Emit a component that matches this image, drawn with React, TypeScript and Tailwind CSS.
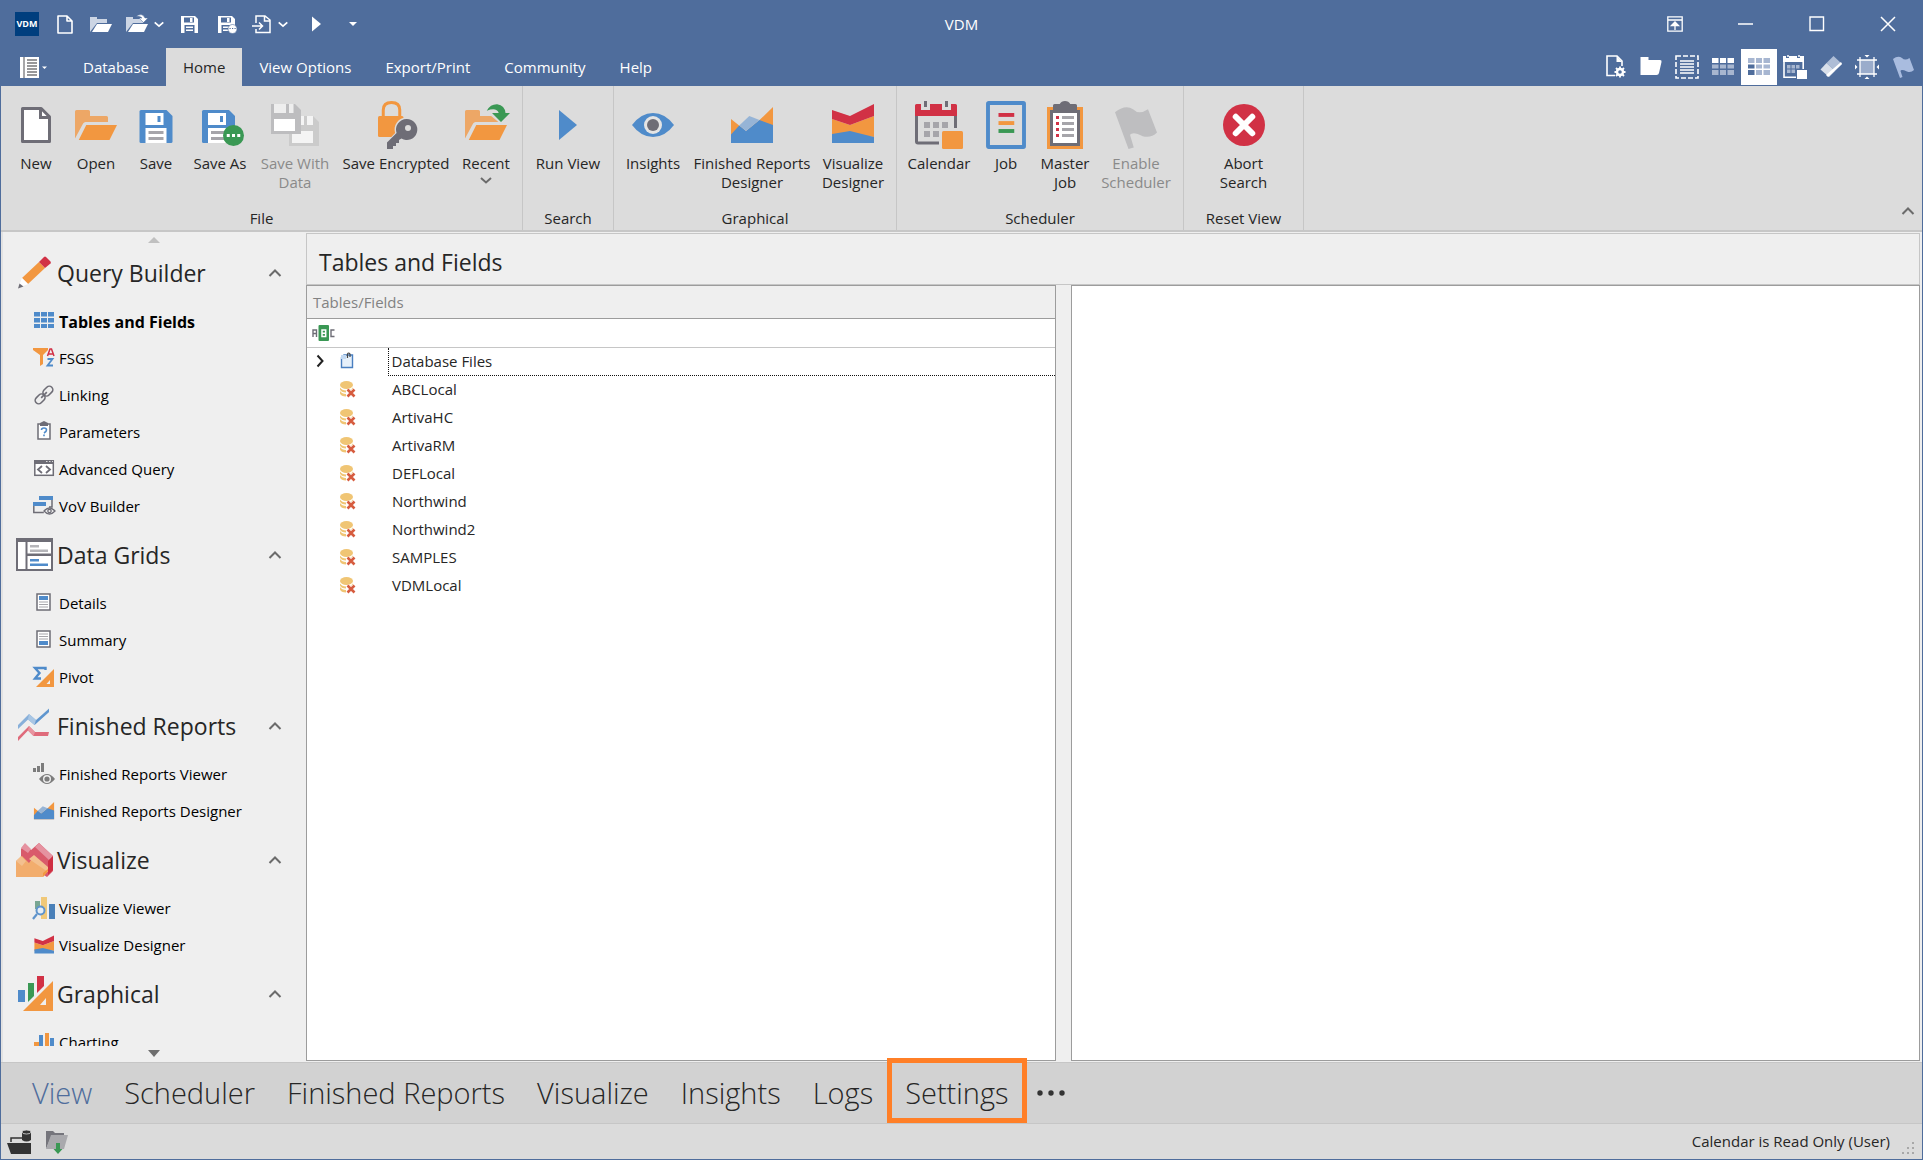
import type { ReactNode } from "react";

const ORANGE = "#f29740";
const LIGHT_ORANGE = "#eda766";
const BLUE = "#4f8bca";
const GREY = "#6e6d76";
const SILVER = "#a6a5aa";
const GREEN = "#3a9854";
const RED = "#d13145";

function Svg({ size = 24, box, children }: { size?: number; box?: number; children: ReactNode }) {
  const b = box ?? size;
  return (
    <svg width={size} height={size} viewBox={`0 0 ${b} ${b}`} fill="none" className="shrink-0" aria-hidden="true">
      {children}
    </svg>
  );
}

function Chevron({ dir, size = 14, color = "#6b6b6b" }: { dir: "up" | "down" | "right"; size?: number; color?: string }) {
  const d = { up: "M1.5 10 7 4.5 12.5 10", down: "M2 5 7 9.5 12 5", right: "M4.5 1.5 9.5 7 4.5 12.5" }[dir];
  return (
    <Svg size={size} box={14}>
      <path d={d} stroke={color} strokeWidth="2" />
    </Svg>
  );
}

// ---- ribbon drawings, all on a 32 unit grid ----

const folderShape = (
  <>
    <path d="M2 25V7q0-1 1-1h8q1 0 1 1v3h11q1 0 1 1v3H9q-1 0-1.6 1z" fill={LIGHT_ORANGE} />
    <path d="M9.5 16H30l-5 10H4.5z" fill={ORANGE} />
  </>
);

const floppyShape = (
  <>
    <path d="M5 7q0-1 1-1h17l4 4v17q0 1-1 1H6q-1 0-1-1z" fill={BLUE} />
    <path d="M9 8h12v8H9zM9 18h14v10H9z" fill="#fff" />
    <path d="M17 10h2v4h-2z" fill={BLUE} />
    <path d="M11 20h10v2H11zM11 24h10v2H11z" fill={SILVER} />
  </>
);

const reportChart = (
  <>
    <path d="M2 12 12 20 21 12.7 30 4V28H2z" fill={ORANGE} />
    <path d="M2 22.4 7.5 16.4 12 20 21 12.7 30 16V28H2z" fill={BLUE} />
    <path d="M7.5 16.4 14.2 10 21 12.7 12 20z" fill="#96b4d6" />
  </>
);

const visualizeChart = (
  <>
    <path d="M2 12 14 16 30 10V24L14 22 2 24z" fill={ORANGE} />
    <path d="M2 6 14 10 30 2V10L14 16 2 12z" fill={RED} />
    <path d="M2 22 14 20 30 24V28H2z" fill={BLUE} />
  </>
);

const ribbonIcons: Record<string, ReactNode> = {
  new: (
    <>
      <path d="M7 5h12.5L25 10.5V27H7z" fill="#fff" stroke={GREY} strokeWidth="2" strokeLinejoin="round" />
      <path d="M19 5v6h6" stroke={GREY} strokeWidth="2" />
    </>
  ),
  open: folderShape,
  save: floppyShape,
  saveAs: (
    <>
      <g transform="translate(-1 0)">{floppyShape}</g>
      <circle cx="25" cy="23" r="7" fill={GREEN} />
      <path d="M20.5 22h2v2h-2zM24 22h2v2h-2zM27.5 22h2v2h-2z" fill="#fff" />
    </>
  ),
  saveWithData: (
    <>
      <path d="M12 10h16l4 4v16H12z" fill="#cbcbcb" />
      <path d="M18 10h10v6H18zM14 20h14v8H14z" fill="#f4f4f4" />
      <path d="M22 10h2v6h-2z" fill="#cbcbcb" />
      <path d="M0 2h16l4 4v16H0z" fill="#bdbdbf" />
      <path d="M2 2h13v6H2z" fill="#eee" />
      <path d="M2 12h14v8H2z" fill="#fff" />
      <path d="M10 2h2v6h-2z" fill="#bdbdbf" />
    </>
  ),
  encrypted: (
    <>
      <path d="M7.5 11V6q0-5 5.5-5t5.5 5v5" stroke={ORANGE} strokeWidth="2" />
      <path d="M5 10h15q1 0 1 1v12q0 1-1 1H5q-1 0-1-1V11q0-1 1-1z" fill={ORANGE} />
      <path d="M23 11a8 8 0 0 0-7.6 10.4L9 28v4h4l8-5.5a8 8 0 0 0 2-15.5z" fill="#dcdcdc" />
      <path d="M23 12a7 7 0 0 0-6.6 9.3L10 27.6V32h4v-2h2v-2h2v-2l1.6-1A7 7 0 1 0 23 12zm1 4a2 2 0 1 1 0 4 2 2 0 0 1 0-4z" fill={GREY} fillRule="evenodd" />
    </>
  ),
  recent: (
    <>
      {folderShape}
      <path d="M17 8h15l-6.5 7z" fill="#dcdcdc" />
      <path d="M16.5 6.5Q19 2 23.5 2.2 28.5 3 29 8h3l-6 6-6-6h4.5q-1.5-4-8-1.5z" fill={GREEN} />
    </>
  ),
  run: <path d="M10 6 22 16 10 26z" fill={BLUE} />,
  insights: (
    <>
      <path d="M2 16Q8 8 16 8t14 8q-6 8-14 8T2 16z" fill={BLUE} />
      <circle cx="16" cy="16" r="6" fill="#e4e4e4" />
      <circle cx="16" cy="16" r="4" fill={GREY} />
    </>
  ),
  reportsDesigner: reportChart,
  visualizeDesigner: visualizeChart,
  calendar: (
    <>
      <path d="M0 3q0-1 1-1h3v4h6V2h8v4h6V2h3q1 0 1 1v7H0z" fill={RED} />
      <path d="M6 0h2v4H6zM20 0h2v4h-2z" fill={GREY} />
      <path d="M1 10v17q0 1 1 1h14M27 10v8" stroke={GREY} strokeWidth="2" />
      <path d="M6 14h4v4H6zM12 14h4v4h-4zM18 14h4v4h-4zM6 20h4v4H6zM12 20h4v4h-4z" fill={SILVER} />
      <rect x="18" y="20" width="14" height="12" rx="1" fill={ORANGE} />
    </>
  ),
  job: (
    <>
      <rect x="4" y="1.3" width="24" height="29.4" rx="0.5" stroke={BLUE} strokeWidth="2.6" />
      <path d="M11 8h10.5v2.6H11z" fill={RED} />
      <path d="M11 13.4h10.5V16H11z" fill={ORANGE} />
      <path d="M11 18.7h10.5v2.6H11z" fill={GREEN} />
    </>
  ),
  masterJob: (
    <>
      <path d="M4 4h24v28H4z" fill={ORANGE} />
      <path d="M6 6h20v24H6z" fill={GREY} />
      <path d="M8 8h16v20H8z" fill="#fff" />
      <path d="M8 8V3q0-1 1-1h3.5Q13.5 0 16 0t3.5 2H23q1 0 1 1v5z" fill={GREY} />
      <path d="M10 10h2v2h-2zM10 14h2v2h-2zM10 18h2v2h-2zM10 22h2v2h-2z" fill={RED} />
      <path d="M14 10h8v2h-8zM14 14h8v2h-8zM14 18h8v2h-8zM14 22h8v2h-8z" fill={SILVER} />
    </>
  ),
  enable: <path d="M2 7.5Q9 2 14 5.5q4 4 10 0L30 21q-4 4-9.5 2.5Q14 20 12 22.5l2.5 8.5-3.5 1z" fill="#bebec0" />,
  abort: (
    <>
      <circle cx="16" cy="16" r="14" fill={RED} />
      <path d="M10.5 10.5l11 11m0-11-11 11" stroke="#fff" strokeWidth="4" strokeLinecap="round" />
    </>
  ),
};

type RibbonItem = { icon: string; lines: string[]; width: string; disabled?: boolean; drop?: boolean };

const ribbonGroups: { name: string; className: string; items: RibbonItem[] }[] = [
  {
    name: "File",
    className: "w-[521px] pl-[5px]",
    items: [
      { icon: "new", lines: ["New"], width: "w-[60px]" },
      { icon: "open", lines: ["Open"], width: "w-[60px]" },
      { icon: "save", lines: ["Save"], width: "w-[60px]" },
      { icon: "saveAs", lines: ["Save As"], width: "w-[68px]" },
      { icon: "saveWithData", lines: ["Save With", "Data"], width: "w-[82px]", disabled: true },
      { icon: "encrypted", lines: ["Save Encrypted"], width: "w-[120px]" },
      { icon: "recent", lines: ["Recent"], width: "w-[60px]", drop: true },
    ],
  },
  {
    name: "Search",
    className: "w-[90px]",
    items: [{ icon: "run", lines: ["Run View"], width: "w-[90px]" }],
  },
  {
    name: "Graphical",
    className: "w-[282px] pl-[3px]",
    items: [
      { icon: "insights", lines: ["Insights"], width: "w-[72px]" },
      { icon: "reportsDesigner", lines: ["Finished Reports", "Designer"], width: "w-[126px]" },
      { icon: "visualizeDesigner", lines: ["Visualize", "Designer"], width: "w-[76px]" },
    ],
  },
  {
    name: "Scheduler",
    className: "w-[286px] pl-[4px]",
    items: [
      { icon: "calendar", lines: ["Calendar"], width: "w-[76px]" },
      { icon: "job", lines: ["Job"], width: "w-[58px]" },
      { icon: "masterJob", lines: ["Master", "Job"], width: "w-[60px]" },
      { icon: "enable", lines: ["Enable", "Scheduler"], width: "w-[82px]", disabled: true },
    ],
  },
  {
    name: "Reset View",
    className: "w-[119px]",
    items: [{ icon: "abort", lines: ["Abort", "Search"], width: "w-[119px]" }],
  },
];

// ---- sidebar drawings ----

const docFrame = <rect x="5" y="2" width="13" height="16" fill="#fff" stroke={GREY} strokeWidth="1.5" />;

const navIcons: Record<string, ReactNode> = {
  pencil: (
    <>
      <path d="m6 24 17-16 6 6-17 16z" fill={ORANGE} />
      <path d="m23 8 5-5q1-.8 2 0l4.5 4.5q.8 1 0 2L29 14z" fill={RED} />
      <path d="m6 24 6 6-10 4z" fill="#fff" />
      <path d="m3.5 29.5 4 3L2 34.5z" fill={GREY} />
    </>
  ),
  grids: (
    <>
      <path d="M0 2h37v33H0z" fill={GREY} />
      <path d="M2 6h7.5v27H2zM11.5 6H35v11.5H11.5zM11.5 20H35v13H11.5z" fill="#fff" />
      <path d="M14 9h9v2.5h-9zM14 13.5h18V16H14z" fill="#b5b5b9" />
      <path d="M14 23h9v2.5h-9zM14 27.5h18V30H14z" fill={BLUE} />
    </>
  ),
  reports: (
    <g transform="translate(0 1)">
      <path d="M2 17 13 6l7 6L33 1v3L18.5 17 12 11.5 2 21z" fill="#88b0da" />
      <path d="m13 6 7 6-1.5 5-6.5-5.5z" fill="#a9c6e4" />
      <path d="m20 12.5 13-12v3.5L18.5 17z" fill={BLUE} fillOpacity=".7" />
      <path d="M2 29 13 18l6 6h14l-1 4H17.5L12 22.5 2 33z" fill="#df6b7b" />
      <path d="m13 18 6 6-1.5 4-5.5-5.5z" fill="#e895a0" />
    </g>
  ),
  visualize: (
    <>
      <path d="M5 8 9 3l6 6 8-7 14 13v15l-6 6L5 20z" fill="#d95a6b" />
      <path d="m9 2 6 6-3 4-7-5zM23 2l14 13-4 4-14-13z" fill="#e592a0" />
      <path d="m32 20 5-5v14l-5 5z" fill="#cf2f43" />
      <path d="m0 20 6-5 7 7 5-7 14 15-5 6H0z" fill="#f2ad6d" />
      <path d="m0 20 5-5 5 5-4 5zM18 14l14 12v5L13 18z" fill="#f3c08f" />
      <path d="m27 36 5-6v-2l-5 4z" fill={ORANGE} />
    </>
  ),
  graphical: (
    <>
      <path d="M2 15h7v12H2z" fill={BLUE} />
      <path d="M12 8h6v13l-6 6z" fill={GREEN} />
      <path d="M21 1h7v10l-7 7z" fill={RED} />
      <path d="M37 6v30H7zm-7 17-6 7h6z" fill={ORANGE} fillRule="evenodd" />
    </>
  ),
  tables: (
    <path
      d="M2 2h6v4.5H2zM9 2h6v4.5H9zM16 2h6v4.5h-6zM2 8h6v4.5H2zM9 8h6v4.5H9zM16 8h6v4.5h-6zM2 14h6v4H2zM9 14h6v4H9zM16 14h6v4h-6z"
      fill={BLUE}
    />
  ),
  filter: (
    <>
      <path d="M1 1h15v2l-5 5v9l-3 2V8L1 3z" fill={ORANGE} />
      <path d="m15.5 9 2.5-7h1.5L22 9M16.5 7h4.5" stroke={RED} strokeWidth="1.5" />
      <path d="M15.5 12h5l-5 6.5H21" stroke={BLUE} strokeWidth="1.8" />
    </>
  ),
  link: (
    <g transform="rotate(-45 12 11)" stroke={GREY} strokeWidth="1.6">
      <rect x="1" y="7.5" width="11" height="7" rx="3.5" />
      <rect x="12" y="7.5" width="11" height="7" rx="3.5" />
      <path d="M8 11h8" />
    </g>
  ),
  params: (
    <>
      <rect x="6" y="3" width="12" height="15" fill="#fff" stroke={GREY} strokeWidth="1.5" />
      <path d="M8 5V2l4-2 4 2v3z" fill={GREY} />
      <path d="M9.5 9q0-2 2.5-2t2.5 2q0 1.5-2.5 3M12 13.5v1.8" stroke={BLUE} strokeWidth="1.6" />
    </>
  ),
  code: (
    <>
      <rect x="2.8" y="2.8" width="18.5" height="14.5" fill="#fff" stroke={GREY} strokeWidth="1.5" />
      <path d="M2 2h20v4H2z" fill={GREY} />
      <path d="M14 3.5h1.5M17 3.5h1.5M20 3.5h1" stroke="#ddd" strokeWidth="1" />
      <path d="m10 8-4 3.5 4 3.5M14 8l4 3.5-4 3.5" stroke={GREY} strokeWidth="1.8" />
    </>
  ),
  vov: (
    <>
      <path d="M7 1h14v4H7z" fill={BLUE} />
      <path d="M20 5v7h-3M1.8 10v7.5h10" stroke={GREY} strokeWidth="1.5" />
      <path d="M1 7h13v4H1z" fill={BLUE} />
      <path d="M12 16q5.5-6 11 0-5.5 6-11 0z" fill="#f0f0f0" stroke={GREY} strokeWidth="1.3" />
      <circle cx="17.5" cy="16" r="1.7" stroke={GREY} strokeWidth="1.3" />
    </>
  ),
  details: (
    <>
      {docFrame}
      <path d="M7 4h9v4H7z" fill={BLUE} />
      <path d="M7 10h9M7 12.5h9M7 15h9" stroke={SILVER} strokeWidth="1" />
    </>
  ),
  summary: (
    <>
      {docFrame}
      <path d="M7 5h9M7 7.5h9M7 10h9" stroke={SILVER} strokeWidth="1" />
      <path d="M7 12h9v4H7z" fill={BLUE} />
    </>
  ),
  pivot: (
    <>
      <path d="M13.5 4V2H3l4.5 5L3 12.5h6" stroke={BLUE} strokeWidth="2.4" />
      <path d="M22 3v18H4zm-4 11-3.5 4H18z" fill={ORANGE} fillRule="evenodd" />
    </>
  ),
  reportViewer: (
    <>
      <path d="M1 5h3v4H1zM5 3h3v6H5zM9 0h3v9H9z" fill="#7c7c7c" />
      <path d="M7 16q8-10 16 0-8 10-16 0z" fill="#7c7c7c" />
      <circle cx="15" cy="16" r="3.3" fill="#7c7c7c" stroke="#f0f0f0" strokeWidth="1.4" />
    </>
  ),
  visualizeViewer: (
    <>
      <path d="M3 4h5v8H3z" fill="#79a692" />
      <path d="M9 0h6v22H9z" fill="#f0c878" />
      <path d="M17 7h6v15h-6z" fill="#4a80b8" />
      <circle cx="8.5" cy="13.5" r="4" fill="#e5edf5" stroke="#5f94cc" strokeWidth="2" />
      <path d="m5 17-4 5" stroke="#5f94cc" strokeWidth="2.2" />
    </>
  ),
  charting: (
    <>
      <path d="M2 11h5v8H2zM13 2h4v17h-4z" fill={ORANGE} />
      <path d="M7 4h4v15H7zM18 7h4v12h-4z" fill={BLUE} />
    </>
  ),
  reportDesigner: <g transform="translate(.5 -1) scale(.72)">{reportChart}</g>,
  visualizeDesigner: <g transform="translate(1 0) scale(.7)">{visualizeChart}</g>,
};

const sections = [
  {
    title: "Query Builder",
    icon: "pencil",
    items: [
      { label: "Tables and Fields", icon: "tables", active: true },
      { label: "FSGS", icon: "filter" },
      { label: "Linking", icon: "link" },
      { label: "Parameters", icon: "params" },
      { label: "Advanced Query", icon: "code" },
      { label: "VoV Builder", icon: "vov" },
    ],
  },
  {
    title: "Data Grids",
    icon: "grids",
    items: [
      { label: "Details", icon: "details" },
      { label: "Summary", icon: "summary" },
      { label: "Pivot", icon: "pivot" },
    ],
  },
  {
    title: "Finished Reports",
    icon: "reports",
    items: [
      { label: "Finished Reports Viewer", icon: "reportViewer" },
      { label: "Finished Reports Designer", icon: "reportDesigner" },
    ],
  },
  {
    title: "Visualize",
    icon: "visualize",
    items: [
      { label: "Visualize Viewer", icon: "visualizeViewer" },
      { label: "Visualize Designer", icon: "visualizeDesigner" },
    ],
  },
  {
    title: "Graphical",
    icon: "graphical",
    items: [{ label: "Charting", icon: "charting" }],
  },
];

const connections = ["ABCLocal", "ArtivaHC", "ArtivaRM", "DEFLocal", "Northwind", "Northwind2", "SAMPLES", "VDMLocal"];

// ---- title bar drawings ----

const whiteFolder = (
  <>
    <path d="M1 20V5h7v2h10v4H8z" fill="#ccd5e4" />
    <path d="M8 12h15l-4 8H3z" fill="#fff" />
  </>
);

const whiteFloppy = (
  <>
    <path d="M4 4h14l3 3v14H4z" fill="#fff" />
    <path d="M7 5.5h10v5H7zM7.5 13h10v8h-10z" fill="#4f6d9c" />
    <path d="M13 6h2.5v4H13zM9 14.5h7V16H9zM9 17.5h7V19H9z" fill="#fff" />
  </>
);

const quickIcons: { name: string; drop?: boolean; art: ReactNode }[] = [
  { name: "New", art: <path d="M5 4h9l5 5v12H5zM14 4v5h5" stroke="#fff" strokeWidth="1.6" strokeLinejoin="round" /> },
  { name: "Open", art: whiteFolder },
  {
    name: "Recent",
    drop: true,
    art: (
      <>
        {whiteFolder}
        <path d="M11 4.5q6-4.5 9 1.5h3l-4.5 4.5L14 6h3q-2-2.500-6-1.500z" fill="#fff" stroke="#4f6d9c" strokeWidth=".5" />
      </>
    ),
  },
  { name: "Save", art: whiteFloppy },
  {
    name: "Save As",
    art: (
      <g transform="translate(1 0)">
        {whiteFloppy}
        <circle cx="18.5" cy="17" r="4.5" fill="#fff" stroke="#4f6d9c" strokeWidth=".6" />
        <path d="M15.5 16.5h1.200M18 16.5h1.200M20.5 16.5h1.200" stroke="#4f6d9c" strokeWidth="1.2" />
      </g>
    ),
  },
  {
    name: "Import",
    drop: true,
    art: (
      <>
        <path d="M7 11V4h9l5 4v12.5H7V17M15.5 4v5H21" stroke="#fff" strokeWidth="1.5" />
        <path d="M3 14h10M10 10.5l3.5 3.5-3.5 3.5" stroke="#fff" strokeWidth="1.5" />
      </>
    ),
  },
  { name: "Run View", art: <path d="M11 4.5 20 12l-9 7.5z" fill="#fff" /> },
];

const toolIcons: { name: string; on?: boolean; art: ReactNode }[] = [
  {
    name: "Document options",
    art: (
      <>
        <path d="M12 20.5H4V1h10l5 5v5" stroke="#fff" strokeWidth="1.6" />
        <path d="M13.5 1v6H19z" fill="#fff" />
        <circle cx="17" cy="17" r="3" stroke="#fff" strokeWidth="2.4" />
        <path d="M17 11.5v2M17 20.5v2M11.5 17h2M20.5 17h2M13 13l1.5 1.5M19.5 19.5 21 21M13 21l1.5-1.5M19.5 14.5 21 13" stroke="#fff" strokeWidth="1.8" />
      </>
    ),
  },
  { name: "Folder", art: <path d="M1.5 2h8v3H21q2 0 1.5 2l-2.500 11q-.4 2-2.500 2h-16z" fill="#fff" /> },
  {
    name: "Select all",
    art: (
      <>
        <rect x="1" y="1" width="22" height="22" stroke="#fff" strokeWidth="1.6" strokeDasharray="5 2" />
        <path d="M5 6h14M5 9h14M5 12h14M5 15h14M5 18h14" stroke="#fff" strokeWidth="1.3" />
      </>
    ),
  },
  {
    name: "Header grid",
    art: (
      <>
        <path d="M1 3h6.5v5H1zM9 3h6v5H9zM16.5 3H23v5h-6.5z" fill="#fff" />
        <path d="M1 9.5h6.5v4H1zM9 9.5h6v4H9zM16.5 9.5H23v4h-6.5zM1 15h6.5v5H1zM9 15h6v5H9zM16.5 15H23v5h-6.5z" fill="#a7b6cf" />
      </>
    ),
  },
  {
    name: "Field grid",
    on: true,
    art: (
      <>
        <path d="M1 3h6.5v5H1zM9 3h6v5H9zM16.5 3H23v5h-6.5zM9 9.5h6v4H9zM16.5 9.5H23v4h-6.5zM9 15h6v5H9zM16.5 15H23v5h-6.5z" fill="#a7b6d1" />
        <path d="M1 9.5h6.5v4H1zM1 15h6.5v5H1z" fill="#4f6d9c" />
      </>
    ),
  },
  {
    name: "Calendar",
    art: (
      <>
        <path d="M0 1h3v2h3V1h8v2h3V1h4v6H0z" fill="#fff" />
        <path d="M5 0v2M16 0v2" stroke="#fff" strokeWidth="1.5" />
        <path d="M1 6v16.2h12M20.2 6v8" stroke="#fff" strokeWidth="1.6" />
        <path d="M4 10h3.5v3.5H4zM8.5 10H12v3.5H8.5zM13 10h3.5v3.5H13zM4 14.5h3.5V18H4zM8.5 14.5H12V18H8.5z" fill="#a7b6cf" />
        <path d="M14 15h10v9H14z" fill="#fff" />
      </>
    ),
  },
  {
    name: "Erase",
    art: (
      <>
        <path d="m14.5 1 8.5 8-7 7-8.5-8z" fill="#aebdd6" />
        <path d="m7.5 8 8.5 8-6 6-8.5-7.5z" fill="#d8dfea" />
        <path d="m23 9-14 13-2-2L22 7z" fill="#fff" />
      </>
    ),
  },
  {
    name: "Fit to frame",
    art: (
      <>
        <rect x="5" y="5" width="14" height="14" fill="#9aaccb" />
        <path d="M5 2v20M19 2v20M2 5h20M2 19h20" stroke="#fff" strokeWidth="1.3" />
        <path d="M9.5 0h5L12 2.5zM9.5 24h5L12 21.5zM0 9.5v5L2.5 12zM24 9.5v5L21.5 12z" fill="#fff" />
      </>
    ),
  },
  { name: "Flag", art: <path d="M2 4Q7 0 11 3q3 3 7.5 0L23 15q-3 3-7 1.5Q10 14 9.5 16l2 6-2.5 1z" fill="#a9bcdf" /> },
];

function TitleBar() {
  const windowButton = "flex h-full w-[71px] items-center justify-center";
  return (
    <header className="grid h-12 grid-cols-[1fr_auto_1fr] items-center text-white">
      <div className="flex items-center pl-[14px]">
        <span className="mr-3.5 flex size-6 items-center justify-center bg-[#003e7e] text-[9px] font-bold">VDM</span>
        <div className="flex items-center gap-3">
          {quickIcons.map((q) => (
            <button key={q.name} aria-label={q.name} className="flex items-center gap-1">
              <Svg>{q.art}</Svg>
              {q.drop && <Chevron dir="down" size={12} color="#fff" />}
            </button>
          ))}
          <button aria-label="Customize quick access" className="flex w-8 justify-center">
            <Svg size={10}>
              <path d="M1 3h8L5 7z" fill="#fff" />
            </Svg>
          </button>
        </div>
      </div>
      <h1 className="text-[15px]">VDM</h1>
      <div className="-mr-px flex h-full justify-end">
        <button aria-label="Ribbon display" className={windowButton}>
          <Svg size={16}>
            <path d="M.8.8h14.4v14.4H.8zM1 4h14" stroke="#fff" strokeWidth="1.3" />
            <path d="M8 14V8M4.5 9.5 8 6l3.5 3.5z" stroke="#fff" strokeWidth="1.3" fill="#fff" />
          </Svg>
        </button>
        <button aria-label="Minimize" className={windowButton}>
          <Svg size={16}>
            <path d="M0 8h15" stroke="#fff" strokeWidth="1.5" />
          </Svg>
        </button>
        <button aria-label="Maximize" className={windowButton}>
          <Svg size={16}>
            <path d="M1 1h13.5v13.5H1z" stroke="#fff" strokeWidth="1.4" />
          </Svg>
        </button>
        <button aria-label="Close" className={windowButton}>
          <Svg size={16}>
            <path d="m1 1 14 14M15 1 1 15" stroke="#fff" strokeWidth="1.5" />
          </Svg>
        </button>
      </div>
    </header>
  );
}

function TabRow() {
  const tabs = ["Database", "Home", "View Options", "Export/Print", "Community", "Help"];
  return (
    <div className="flex h-[38px] items-stretch text-white">
      <button aria-label="Application menu" className="flex w-[65px] items-center pl-[18px]">
        <Svg size={28}>
          <path d="M1 4h19v21H1z" fill="#fff" />
          <path d="M5 4v21M8 7h10M8 10h10M8 13h10M8 16h10M8 19h10M8 22h10" stroke="#77777a" strokeWidth="1.3" />
          <path d="M23 13.5h5L25.5 16z" fill="#fff" />
        </Svg>
      </button>
      <nav className="flex">
        {tabs.map((tab) => (
          <button key={tab} className={`px-[17px] text-[15px] ${tab === "Home" ? "bg-[#dcdcdc] text-[#262626]" : ""}`}>
            {tab}
          </button>
        ))}
      </nav>
      <div className="ml-auto flex items-center pr-px">
        {toolIcons.map((t) => (
          <button key={t.name} aria-label={t.name} className={`flex size-9 items-center justify-center ${t.on ? "bg-white" : ""}`}>
            <Svg>{t.art}</Svg>
          </button>
        ))}
      </div>
    </div>
  );
}

function Ribbon() {
  return (
    <div className="flex h-[146px] border-b-2 border-[#c7c7c7] bg-[#dcdcdc] text-[15px] leading-[19px] text-[#262626]">
      {ribbonGroups.map((group) => (
        <section key={group.name} className="flex flex-col border-r border-[#c6c6c6] pb-0.5">
          <div className={`flex flex-1 items-start pt-[15px] ${group.className}`}>
            {group.items.map((item) => (
              <button
                key={item.icon}
                disabled={item.disabled}
                className={`flex shrink-0 flex-col items-center whitespace-nowrap ${item.width} ${item.disabled ? "text-[#8a8a8a]" : ""}`}
              >
                <Svg size={48} box={32}>
                  {ribbonIcons[item.icon]}
                </Svg>
                <span className="mt-[5px] flex flex-col items-center">
                  {item.lines.map((line) => (
                    <span key={line}>{line}</span>
                  ))}
                </span>
                {item.drop && <Chevron dir="down" size={14} />}
              </button>
            ))}
          </div>
          <h2 className="text-center">{group.name}</h2>
        </section>
      ))}
      <button aria-label="Collapse ribbon" className="mt-auto mr-[7px] mb-3 ml-auto">
        <Chevron dir="up" size={14} />
      </button>
    </div>
  );
}

function Sidebar() {
  return (
    <aside className="flex w-[305px] shrink-0 flex-col border-l-2 border-[#e2e2e2]">
      <button aria-label="Scroll up" className="flex h-[11px] justify-center pt-[5px] pr-0.5">
        <svg width="12" height="6" viewBox="0 0 12 6" aria-hidden="true">
          <path d="M0 6 6 0l6 6z" fill="#c0c0c0" />
        </svg>
      </button>
      <nav className="min-h-0 flex-1 overflow-hidden">
        {sections.map((section) => (
          <section key={section.title}>
            <button className="flex h-[60px] w-full items-center pr-6 pl-[13px] text-left">
              <Svg size={38}>{navIcons[section.icon]}</Svg>
              <span className="ml-[3px] flex-1 text-[23px] text-[#262626]">{section.title}</span>
              <Chevron dir="up" size={14} />
            </button>
            <ul>
              {section.items.map((item) => (
                <li key={item.label}>
                  <a
                    href="#"
                    className={`flex h-[37px] items-center gap-[3px] pl-[29px] text-black ${"active" in item && item.active ? "text-base font-bold" : "text-[15px]"}`}
                  >
                    <Svg>{navIcons[item.icon]}</Svg>
                    {item.label}
                  </a>
                </li>
              ))}
            </ul>
          </section>
        ))}
      </nav>
      <button aria-label="Scroll down" className="flex h-4 justify-center pt-1 pr-0.5">
        <svg width="12" height="7" viewBox="0 0 12 7" aria-hidden="true">
          <path d="M0 0h12L6 7z" fill="#6e6e6e" />
        </svg>
      </button>
    </aside>
  );
}

function FieldTree() {
  return (
    <div className="w-[750px] shrink-0 border border-[#9c9c9c] bg-white">
      <table className="w-full table-fixed border-collapse text-left text-[15px] text-[#262626]">
        <colgroup>
          <col className="w-[26px]" />
          <col className="w-[55px]" />
          <col />
        </colgroup>
        <thead>
          <tr className="h-8 border-b border-[#9c9c9c] bg-[#efefef]">
            <th colSpan={3} className="pl-1.5 font-normal text-[#828282]">
              Tables/Fields
            </th>
          </tr>
        </thead>
        <tbody>
          <tr className="h-[29px] border-b border-[#c6c6c6]">
            <td colSpan={3} className="p-0">
              <label className="flex items-center gap-2 pl-[5px]">
                <svg width="24" height="18" viewBox="0 0 24 18" fill="none" aria-hidden="true">
                  <rect x="6.5" y="1" width="10.5" height="16" rx="1" fill={GREEN} />
                  <path d="M1 13V6h3.5v7M1 9.5h3.5M22.5 6H19v6.5h3.5" stroke={GREY} strokeWidth="1.4" />
                  <path d="M10 6v6.5h3.7V6zM10 9.2h3.7" stroke="#fff" strokeWidth="1.5" />
                </svg>
                <input aria-label="Filter tables and fields" className="h-6 flex-1 outline-none" />
              </label>
            </td>
          </tr>
          <tr className="h-7">
            <td className="p-0 pl-1.5">
              <button aria-label="Expand Database Files" className="block">
                <Chevron dir="right" size={14} color="#222" />
              </button>
            </td>
            <td className="p-0 pl-[5px]">
              <Svg size={18}>
                <path d="M3.5 5.5 6 3h8.5v12.5h-11z" fill="#e6f0fa" stroke="#4a7fc0" strokeWidth="1.4" />
                <path d="M3 3h5v4H3z" fill="#c2d9f2" />
                <path d="M9.5 6V2q1-2 2.5 0v3" stroke="#444" strokeWidth="1.2" />
              </Svg>
            </td>
            <td className="border border-r-0 border-dotted border-[#111] p-0 pl-[3px]">Database Files</td>
          </tr>
          {connections.map((name) => (
            <tr key={name} className="h-7">
              <td className="p-0" />
              <td className="p-0 pl-[5px]">
                <Svg size={18}>
                  <ellipse cx="8.5" cy="5" rx="6.5" ry="4" fill="#f0c574" />
                  <path d="M2 7.5q2 3 6 3v2q-5 0-6-3zM2 11q2 3 6 3v2.5q-5 0-6-3zM10 10.3q4-.6 5-3v2z" fill="#f0c574" />
                  <path d="m9.5 9.5 7 7m0-7-7 7" stroke="#fff" strokeWidth="3.5" />
                  <path d="m9.5 9.5 7 7m0-7-7 7" stroke="#d65c3f" strokeWidth="2.6" />
                </Svg>
              </td>
              <td className="p-0 pl-1">{name}</td>
            </tr>
          ))}
        </tbody>
      </table>
    </div>
  );
}

function BottomNav() {
  const links = ["View", "Scheduler", "Finished Reports", "Visualize", "Insights", "Logs"];
  return (
    <nav className="flex h-[62px] items-center border-y border-[#c6c6c6] bg-[#d2d2d2] pl-[15px] text-[29px] leading-[44px] font-light text-[#262626]">
      {links.map((link) => (
        <a key={link} href="#" className={`px-4 ${link === "View" ? "text-[#4f6d9c]" : ""}`}>
          {link}
        </a>
      ))}
      <a href="#" className="relative px-4">
        Settings
        <span className="absolute -inset-x-0.5 -top-[13px] -bottom-2 border-[5px] border-[#ff7f27]" />
      </a>
      <button aria-label="More" className="ml-3">
        <svg width="28" height="8" viewBox="0 0 28 8" fill="#333" aria-hidden="true">
          <circle cx="3" cy="4" r="2.7" />
          <circle cx="14" cy="4" r="2.7" />
          <circle cx="25" cy="4" r="2.7" />
        </svg>
      </button>
    </nav>
  );
}

function StatusBar() {
  return (
    <footer className="flex h-[35px] items-center bg-[#dbdbdb] pr-[6px] pl-[6px] text-[15px] text-[#262626]">
      <button aria-label="Data source">
        <Svg size={26}>
          <path d="M4 13V9h11" stroke="#333" strokeWidth="1.5" />
          <path d="M0 14h24v11H4z" fill="#333" />
          <path d="M15 3h9v8q-4.5 3-9 0z" fill="#333" />
          <ellipse cx="19.5" cy="3" rx="4.5" ry="2" fill="#333" stroke="#dbdbdb" strokeWidth=".8" />
        </Svg>
      </button>
      <button aria-label="Download folder" className="ml-3">
        <Svg size={26}>
          <path d="M1 20V2h7l2 2h9v4H6z" fill="#75757c" />
          <path d="M6 6h17l-4 14H1z" fill="#a9a9ad" />
          <path d="M11 14h4v6h2.5L13 25l-4.5-5H11z" fill={GREEN} />
        </Svg>
      </button>
      <span className="ml-auto">Calendar is Read Only (User)</span>
      <span className="mt-3 ml-[10px]">
        <Svg size={16}>
          <path d="M12 2h2v2h-2zM7 7h2v2H7zM12 7h2v2h-2zM2 12h2v2H2zM7 12h2v2H7zM12 12h2v2h-2z" fill="#a8a8a8" />
        </Svg>
      </span>
    </footer>
  );
}

export default function App() {
  return (
    <div className="flex h-screen flex-col overflow-hidden border-x border-b border-[#4f6d9c] bg-[#4f6d9c] font-['Open_Sans',sans-serif]">
      <TitleBar />
      <TabRow />
      <Ribbon />
      <div className="flex min-h-0 flex-1 bg-[#efefef] pr-0.5">
        <Sidebar />
        <main className="flex min-w-0 flex-1 flex-col pt-px pb-px">
          <div className="flex h-[52px] items-center border border-[#c6c6c6] px-3 pt-1.5">
            <h2 className="text-[23px] text-[#262626]">Tables and Fields</h2>
          </div>
          <div className="flex min-h-0 flex-1 gap-[15px]">
            <FieldTree />
            <div className="flex-1 border border-[#9c9c9c] bg-white" />
          </div>
        </main>
      </div>
      <BottomNav />
      <StatusBar />
    </div>
  );
}
